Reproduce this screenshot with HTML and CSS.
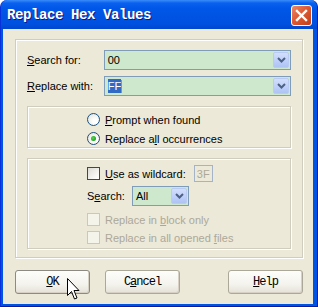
FILE: index.html
```
<!DOCTYPE html>
<html lang="en">
<head>
<meta charset="UTF-8" />
<title>Replace Hex Values</title>
<link rel="stylesheet" href="styles.css">
</head>
<body>
<div class="window">
  <div class="titlebar">
    <span class="title">Replace Hex Values</span>
    <div class="close">
      <svg width="13" height="13" viewBox="0 0 13 13"><path d="M2 2 L11 11 M11 2 L2 11" stroke="#fff" stroke-width="2.4" stroke-linecap="square"/></svg>
    </div>
  </div>
  <div class="client">
    <div class="frame">
      <div class="row">
        <label class="lbl"><u>S</u>earch for:</label>
        <div class="combo wide">
          <span class="value">00</span>
          <span class="drop"><svg width="9" height="6" viewBox="0 0 9 6"><path d="M1 1 L4.5 4.5 L8 1" fill="none" stroke="#4d6185" stroke-width="2"/></svg></span>
        </div>
      </div>
      <div class="row second">
        <label class="lbl"><u>R</u>eplace with:</label>
        <div class="combo wide">
          <span class="value"><span class="sel">FF</span><span class="caret"></span></span>
          <span class="drop"><svg width="9" height="6" viewBox="0 0 9 6"><path d="M1 1 L4.5 4.5 L8 1" fill="none" stroke="#4d6185" stroke-width="2"/></svg></span>
        </div>
      </div>

      <div class="panel radios">
        <div class="opt"><span class="radio"></span><span><u>P</u>rompt when found</span></div>
        <div class="opt"><span class="radio on"></span><span>Replace a<u>l</u>l occurrences</span></div>
      </div>

      <div class="panel options">
        <div class="opt wild"><span class="check"></span><span><u>U</u>se as wildcard:</span><span class="hexbox">3F</span></div>
        <div class="opt search">
          <label class="lbl-s">S<u>e</u>arch:</label>
          <div class="combo small">
            <span class="value">All</span>
            <span class="drop"><svg width="9" height="6" viewBox="0 0 9 6"><path d="M1 1 L4.5 4.5 L8 1" fill="none" stroke="#4d6185" stroke-width="2"/></svg></span>
          </div>
        </div>
        <div class="opt disabled"><span class="check"></span><span>Replace in <u>b</u>lock only</span></div>
        <div class="opt disabled"><span class="check"></span><span>Replace in all opened <u>f</u>iles</span></div>
      </div>
    </div>

    <div class="buttons">
      <button class="btn default"><u>O</u>K</button>
      <button class="btn">C<u>a</u>ncel</button>
      <button class="btn help"><u>H</u>elp</button>
    </div>
  </div>

  <svg class="cursor" width="13" height="23" viewBox="0 0 13 23">
    <path d="M0.5 0.5 L0.5 17.5 L4.5 13.5 L7.5 21 L10 20 L7 12.5 L12 12.5 Z" fill="#fff" stroke="#000" stroke-width="1" stroke-linejoin="miter"/>
  </svg>
</div>
</body>
</html>
```

FILE: styles.css
```
body {
  margin: 0;
  background: #fff;
}
.window {
  position: relative;
  width: 318px;
  height: 307px;
  box-sizing: border-box;
  background: #0054e3;
  border-radius: 7px 7px 0 0;
  border-left: 1px solid #0831d9;
  border-right: 1px solid #001ea0;
  border-bottom: 1px solid #001ea0;
  display: flex;
  flex-direction: column;
  font-family: "Liberation Sans", Arial, sans-serif;
  font-size: 11px;
  color: #000;
}
.titlebar {
  height: 29px;
  flex-shrink: 0;
  display: flex;
  align-items: center;
  justify-content: space-between;
  padding: 0 5px 0 6px;
  border-radius: 7px 7px 0 0;
  background: linear-gradient(#3b8df9 0, #0a61ef 3px, #0058e8 8px, #0054e3 16px, #0150e0 24px, #0048d0 28px);
}
.title {
  font-family: "Liberation Mono", monospace;
  font-weight: bold;
  font-size: 14px;
  letter-spacing: -0.4px;
  color: #fff;
  text-shadow: 1px 1px 0 #0a1a83;
  margin-top: 1px;
}
.close {
  width: 19px;
  height: 19px;
  border: 1px solid #fff;
  border-radius: 3px;
  background: linear-gradient(135deg, #ea8a69, #dd5a33 45%, #c33e18);
  display: flex;
  align-items: center;
  justify-content: center;
  margin-top: 1px;
}
.client {
  flex: 1;
  margin: 0 4px 2px 2px;
  background: #ece9d8;
  padding: 10px 0 0 12px;
}
.frame {
  width: 288px;
  height: 219px;
  box-sizing: border-box;
  border: 1px solid #d0cdbf;
  box-shadow: inset 1px 1px 0 #fff, 1px 1px 0 #fff;
  padding: 10px 11px 8px 11px;
}
.row {
  display: flex;
  align-items: center;
  height: 20px;
}
.row.second {
  margin-top: 6px;
}
.lbl {
  width: 77px;
}
.combo {
  height: 20px;
  box-sizing: border-box;
  border: 1px solid #7f9db9;
  background: #cde8cd;
  display: flex;
  align-items: center;
  justify-content: space-between;
  padding: 0 1px 0 3px;
}
.combo.wide {
  width: 188px;
}
.combo.small {
  width: 57px;
}
.value {
  display: flex;
  align-items: center;
  font-size: 11px;
}
.sel {
  background: #316ac5;
  color: #fff;
  padding: 1px 0;
}
.caret {
  width: 1px;
  height: 13px;
  background: #e08020;
}
.drop {
  width: 16px;
  height: 16px;
  box-sizing: border-box;
  border-radius: 2px;
  border: 1px solid #b9cbf3;
  background: linear-gradient(#d2defb, #bccef9 60%, #afc3f4);
  display: flex;
  align-items: center;
  justify-content: center;
}
.panel {
  width: 264px;
  box-sizing: border-box;
  border: 1px solid #d0cdbf;
  box-shadow: inset 1px 1px 0 #fff, 1px 1px 0 #fff;
  margin-top: 10px;
}
.radios {
  height: 42px;
  padding: 4px 0 0 59px;
  display: flex;
  flex-direction: column;
  gap: 2px;
}
.opt {
  display: flex;
  align-items: center;
  height: 17px;
  gap: 5px;
}
.radio {
  width: 11px;
  height: 11px;
  border: 1px solid #1c5180;
  border-radius: 50%;
  background: radial-gradient(circle at 65% 65%, #fff 20%, #e0dfd6 100%);
  display: flex;
  align-items: center;
  justify-content: center;
}
.radio.on::after {
  content: "";
  width: 5px;
  height: 5px;
  border-radius: 50%;
  background: radial-gradient(circle at 40% 40%, #55d751, #21a121 70%);
}
.options {
  height: 91px;
  padding: 6px 0 0 59px;
  display: flex;
  flex-direction: column;
}
.check {
  width: 11px;
  height: 11px;
  border: 1px solid #1c5180;
  background: linear-gradient(135deg, #dcdbd5, #f6f6f4 70%, #fff);
}
.wild .hexbox {
  margin-left: 3px;
}
.hexbox {
  width: 19px;
  height: 17px;
  box-sizing: border-box;
  border: 1px solid #a4b3c8;
  color: #aca899;
  font-size: 11px;
  display: flex;
  align-items: center;
  justify-content: center;
}
.search {
  height: 20px;
  margin-top: 4px;
  gap: 0;
}
.lbl-s {
  width: 45px;
}
.disabled {
  color: #aca899;
}
.disabled .check {
  border-color: #cac8bb;
  background: #f5f4ea;
}
.options .opt.disabled:nth-child(3) {
  margin-top: 5px;
}
.options .opt.disabled:nth-child(4) {
  margin-top: 1px;
}
.buttons {
  display: flex;
  margin-top: 12px;
  gap: 15px;
}
.btn {
  width: 75px;
  height: 24px;
  box-sizing: border-box;
  border: 1px solid #aca899;
  border-radius: 3px;
  background: linear-gradient(#fdfdfb, #f4f3ee 60%, #e4e2d6);
  box-shadow: inset -1px -1px 0 #d6d0c5;
  font-family: "Liberation Mono", monospace;
  font-size: 12px;
  letter-spacing: -1px;
  color: #000;
  padding: 0;
}
.btn.default {
  border-color: #8b8a83;
}
.btn.help {
  margin-left: 33px;
}
.cursor {
  position: absolute;
  left: 66px;
  top: 278px;
}
```
